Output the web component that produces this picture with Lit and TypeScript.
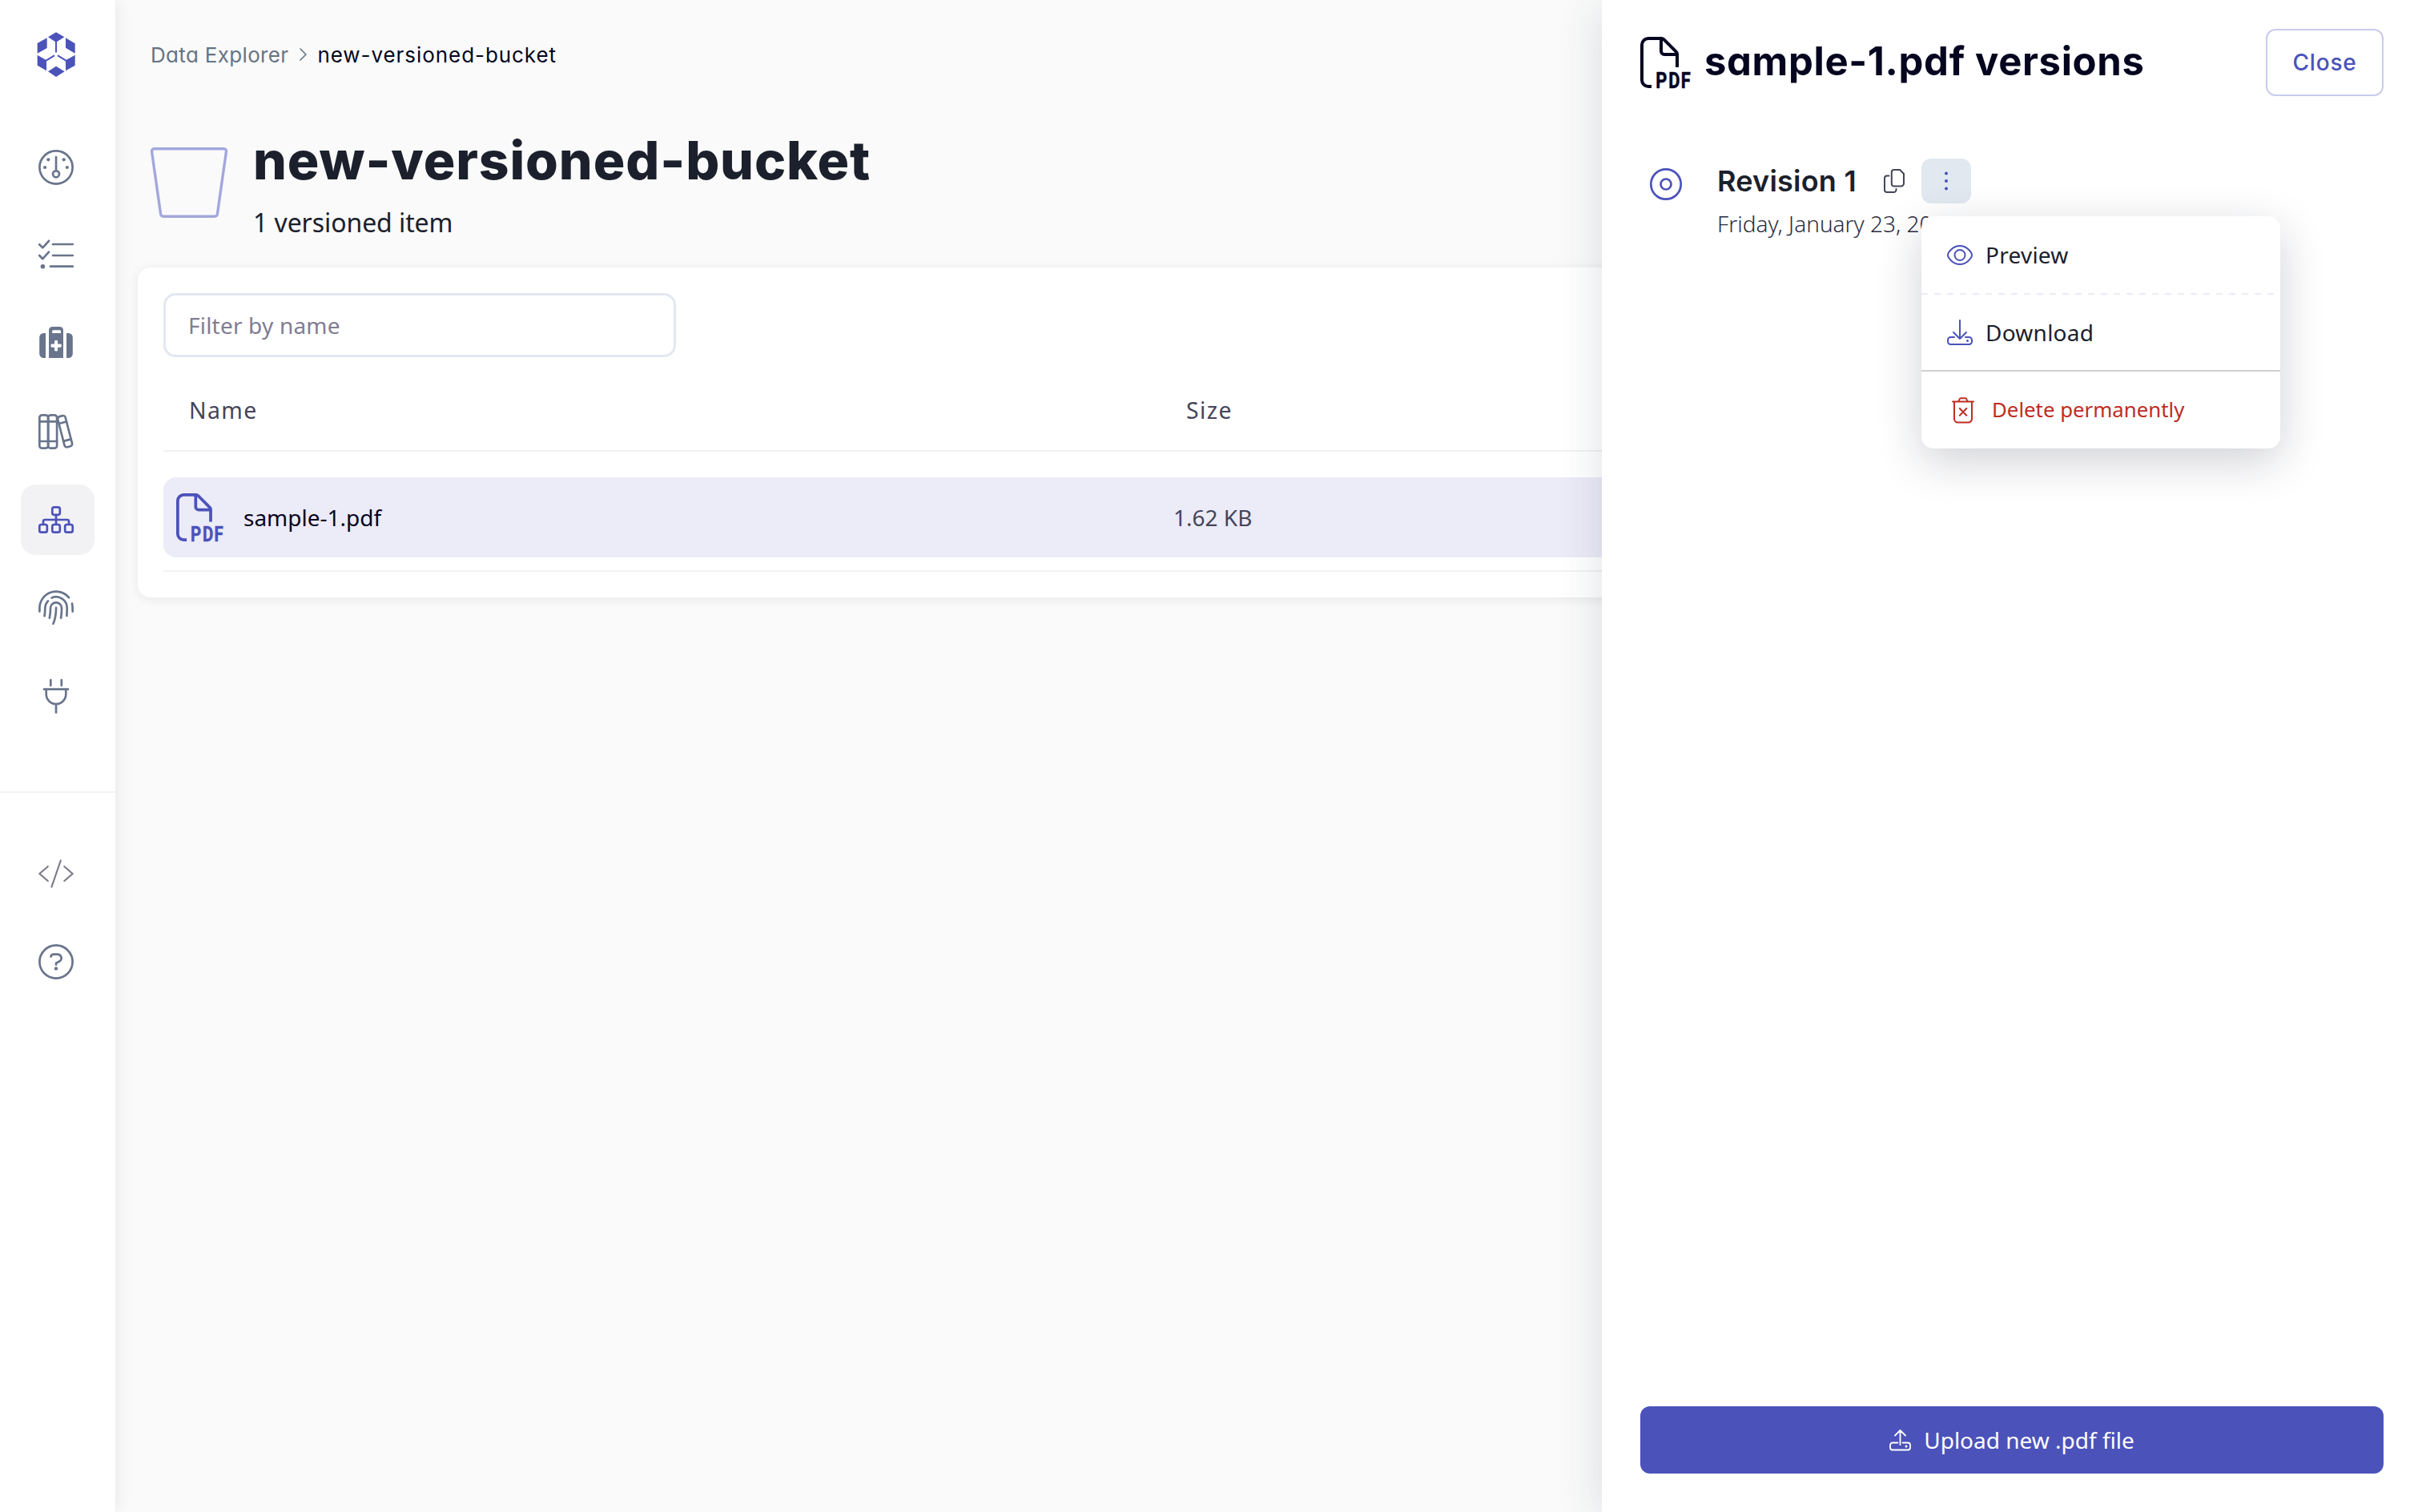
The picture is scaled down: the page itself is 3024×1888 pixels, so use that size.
import { LitElement, html, css, svg } from "lit";
import { customElement } from "lit/decorators.js";

const icon = (cls: string, w: number, h: number, body: unknown, vb = `0 0 ${w} ${h}`) =>
  html`<svg class="icon ${cls}" width=${w} height=${h} viewBox=${vb}>${body}</svg>`;

const logo = svg`
  <g fill="currentColor" stroke="none">
    <path d="M42 19L72 1l31 18-31 19zM2 42l36-20v38L2 80zM108 22l35 21v37l-35-21zM2 86l34 20v39L2 125zM108 106l35-20v39l-35 20zM42 148l30-20 32 20-32 20z"/>
  </g>
  <path d="M72 36v38M35 107l29-18M109 107L80 89" stroke-width="6"/>`;

const gauge = svg`
  <circle cx="22" cy="22" r="20.6"/><path d="M22 9v17"/><circle cx="22" cy="30.3" r="4"/>
  <g fill="currentColor" stroke="none"><circle cx="12.3" cy="12.3" r="2.1"/><circle cx="31.7" cy="12.3" r="2.1"/>
  <circle cx="8.1" cy="22" r="2.1"/><circle cx="35.8" cy="22" r="2.1"/></g>`;

const checklist = svg`
  <path d="M1.2 8.2l4.1 4.2L13 3.8M1.2 22l4.1 4.2L13 17.6M18 8h24.8M18 22h24.8M15 35.7h27.8"/>
  <circle cx="5.4" cy="35.7" r="2.8" fill="currentColor" stroke="none"/>`;

const suitcase = svg`
  <g fill="currentColor" stroke="none">
    <path d="M9 9v31H6.500a5.300 5.300 0 0 1-5.300-5.300V14.300A5.300 5.300 0 0 1 6.500 9zM35 9v31h2.500a5.300 5.300 0 0 0 5.300-5.300V14.300A5.300 5.300 0 0 0 37.500 9z"/>
    <path fill-rule="evenodd" d="M13 40V5.200A4.200 4.200 0 0 1 17.200 1h9.600A4.200 4.200 0 0 1 31 5.200V40zM17.200 9h10.800V6.500a1.300 1.300 0 0 0-1.300-1.300H18.500a1.300 1.300 0 0 0-1.300 1.300zM21.300 18a1.300 1.300 0 0 0-1.300 1.300v3.200h-3.200a1.300 1.300 0 0 0-1.300 1.300v1.600a1.300 1.300 0 0 0 1.300 1.300H20v3.400a1.300 1.300 0 0 0 1.300 1.300h1.500a1.300 1.300 0 0 0 1.300-1.300v-3.400h3.300a1.300 1.300 0 0 0 1.300-1.300v-1.600a1.300 1.300 0 0 0-1.300-1.300h-3.300v-3.200a1.300 1.300 0 0 0-1.300-1.300z"/>
  </g>`;

const books = svg`
  <rect x="1.300" y="1.300" width="10.800" height="41.400" rx="3.200"/><rect x="12.100" y="1.300" width="11" height="41.400" rx="3.200"/>
  <path d="M1.300 9.300h21.800M1.300 34h21.800"/>
  <g transform="rotate(-14.500 33 21.700)"><rect x="28.200" y="2" width="9.800" height="39.400" rx="3"/><path d="M28.200 10.400H38M28.200 33H38"/></g>`;

const tree = svg`
  <rect x="17.300" y="6.300" width="9.500" height="9.500" rx="2.200"/><rect x="1.300" y="28" width="9.500" height="9.700" rx="2.200"/>
  <rect x="17.300" y="28" width="9.500" height="9.700" rx="2.200"/><rect x="33.200" y="28" width="9.500" height="9.700" rx="2.200"/>
  <path d="M22 16v12M6 28v-4a2 2 0 0 1 2-2h28a2 2 0 0 1 2 2v4"/>`;

const fingerprint = svg`
  <path d="M1.400 26.600V22A20.600 20.600 0 0 1 38 9.200M42 16.500c.600 3 .700 6 .700 10.100M16.600 9.400A13.700 13.700 0 0 1 35.700 22c0 4 0 6.500-.400 10M12 13.400A13.700 13.700 0 0 0 8.300 22c0 4-.200 7-.800 10.200M13.800 34.700C14.800 30 15 26 15 22.300a7 7 0 0 1 14 0c0 4-.200 8-.900 12.400M22 21.900c0 8-1 14-3.500 19.900"/>`;

const plug = svg`
  <path d="M15.300 2v7M28.800 2v7M7 13.700h30M9.700 14v5.800a12.300 12.300 0 0 0 24.600 0V14M22 33v9.700"/>`;

const code = svg`<path stroke-width="2.200" d="M11.800 13L1.300 22l10.500 9M32.300 13l10.400 9-10.400 9M27.800 5.500L16.400 38.500"/>`;

const help = svg`
  <circle cx="22" cy="22" r="20.600"/>
  <path d="M15.500 15.600c.300-1.700 1.500-3 3.500-3h5.200a4.700 4.700 0 0 1 2.300 8.600L22 23.700V25.600"/>
  <circle cx="22" cy="30.400" r="2.200" fill="currentColor" stroke="none"/>`;

const bucket = svg`<path stroke-width="3.400" d="M4.500 1.700h87a3 3 0 0 1 3 3.400L83.400 83.300a3.600 3.600 0 0 1-3.500 3H16.100a3.600 3.600 0 0 1-3.500-3L1.500 5.100a3 3 0 0 1 3-3.400z"/>`;

const pdf = svg`
  <g stroke-width="4" stroke-linecap="butt">
    <path d="M14 62H10a8 8 0 0 1-8-8V10a8 8 0 0 1 8-8h16.500a4 4 0 0 1 2.800 1.200L44.800 18.700A4 4 0 0 1 46 21.500V38"/>
    <path d="M26 2v16a4 4 0 0 0 4 4h16"/>
  </g>
  <text class="pdf-label" transform="scale(0.78 1)" x="24.600 45.100 65.200" y="63.600">PDF</text>`;

const eye = svg`
  <path d="M1 12.500C1 10 6.500 1 16 1s15 9 15 11.500S25.500 24 16 24 1 15 1 12.500z"/><circle cx="16" cy="12.500" r="6.500"/>`;

const download = svg`
  <path d="M16 1v23M8 16l8 8 8-8M9 22H4.500A3.500 3.500 0 0 0 1 25.500v2A3.500 3.500 0 0 0 4.500 31h23a3.500 3.500 0 0 0 3.500-3.500v-2a3.500 3.500 0 0 0-3.500-3.500H23"/>
  <circle cx="25.500" cy="26.500" r="1.500" fill="currentColor" stroke="none"/>`;

const upload = svg`
  <path d="M13.500 19V1M7 7.500L13.500 1 20 7.500M10.500 16.500H4A3 3 0 0 0 1 19.500v3A3 3 0 0 0 4 25.500h19a3 3 0 0 0 3-3v-3a3 3 0 0 0-3-3h-6.500"/>
  <circle cx="21" cy="21" r="1.500" fill="currentColor" stroke="none"/>`;

const trash = svg`
  <path d="M1 5.500h26M3 5.500V27a4.500 4.500 0 0 0 4.500 4.500h13A4.500 4.500 0 0 0 25 27V5.500M8.500 5l1-2.500A2 2 0 0 1 11.300 1.200h5.400a2 2 0 0 1 1.800 1.300l1 2.500M9.800 14l8.500 8.700M18.300 14l-8.500 8.700"/>`;

const copy = svg`
  <path d="M12.500 1h7.500l5 5v12a3.500 3.500 0 0 1-3.500 3.500h-9A3 3 0 0 1 9.800 18.500V4A3 3 0 0 1 12.800 1zM6.500 8.500H4A3 3 0 0 0 1 11.500V26a3 3 0 0 0 3 3h8.500a3 3 0 0 0 3-3V25"/>`;

@customElement("app-root")
export class AppRoot extends LitElement {
  static styles = css`
    :host {
      display: block;
      --brand: #4b52ba;
      --ink: #050520;
      --text: #1b202c;
      --display: Inter, "Open Sans", sans-serif;
      font-family: "Noto Sans", "Open Sans", sans-serif;
      font-size: 28px;
      color: var(--text);
    }
    * { box-sizing: border-box; }
    .icon { display: block; flex: none; fill: none; stroke: currentColor; stroke-width: 2.7; stroke-linecap: round; stroke-linejoin: round; overflow: visible; }
    .shell { position: relative; display: flex; height: 1888px; background: #fafafa; overflow: hidden; white-space: nowrap; }
    .sidebar { position: relative; z-index: 1; width: 144px; flex: none; display: flex; flex-direction: column; background: #fff; box-shadow: 0 0 20px rgba(0, 0, 0, 0.09); color: #69758c; }
    .brand { padding: 40px 0 0 46px; height: 165px; color: var(--brand); }
    .nav { display: flex; flex-direction: column; gap: 22px; padding-left: 26px; }
    .nav-item { width: 92px; height: 88px; padding-left: 22px; display: flex; align-items: center; border-radius: 19px; }
    .nav-item.active { background: #f2f2f5; color: var(--brand); }
    .nav-item.muted { color: #7f7a8b; }
    .nav-lower { margin-top: 75px; padding-top: 57px; border-top: 2px solid #f1f1f2; }

    .main { flex: 1; min-width: 0; padding: 48px 32px 0 28px; }
    .crumbs { display: flex; align-items: center; height: 40px; padding-left: 16px; font: 400 26px/42px var(--display); font-feature-settings: "cv11"; color: #677483; }
    .crumb-root { padding-top: 1px; letter-spacing: 0.33px; }
    .chevron { margin: 0 13px 0 14px; stroke-width: 1.6; }
    .current { padding-top: 1px; letter-spacing: 0.94px; color: var(--ink); }
    .heading { display: flex; padding: 72px 0 0 16px; }
    .bucket { margin: 24px 31px 0 0; color: #a3a7dd; }
    .title { margin: 0; padding-left: 1px; font: 800 66px/80px var(--display); font-feature-settings: "cv11"; letter-spacing: 0.88px; }
    .subtitle { margin-top: 16px; padding-left: 1px; font-size: 32px; line-height: 44px; letter-spacing: -0.08px; }
    .card { margin-top: 34px; height: 412px; padding: 32px; border-radius: 16px; background: #fff; box-shadow: 0 2px 14px rgba(0, 0, 0, 0.08); }
    .filter { display: flex; align-items: center; width: 640px; height: 80px; padding-left: 28px; border: 3px solid #e2e8f0; border-radius: 15px; letter-spacing: 0.2px; color: #817c93; }
    .row { display: grid; grid-template-columns: 1245px 1fr; align-items: center; }
    .row.head { margin-top: 16px; height: 102px; padding-left: 32px; border-bottom: 2px solid #f2f2f4; font-size: 28.4px; letter-spacing: 0.05em; color: #444559; }
    .table-body { padding: 32px 0 16px; border-bottom: 2px solid #f2f2f4; }
    .row.file { height: 100px; padding-left: 16px; border-radius: 16px; background: #ecebf8; color: #444559; }
    .file-name { display: flex; align-items: center; gap: 26px; font-weight: 450; color: var(--ink); }
    .file-name .icon { color: var(--brand); }
    .pdf-label { font: 700 28px Roboto, "Liberation Sans", sans-serif; fill: currentColor; stroke: currentColor; stroke-width: 0.6; }

    .drawer { position: absolute; z-index: 2; top: 0; right: 0; width: 1024px; height: 1888px; padding: 36px 48px 48px; display: flex; flex-direction: column; background: #fff; box-shadow: 0 8px 52px rgba(40, 60, 80, 0.16); }
    .drawer-head { display: flex; align-items: center; height: 84px; color: var(--ink); }
    .drawer-title { flex: 1; margin: -2px 0 0 18px; font: 700 49px/84px var(--display); font-feature-settings: "cv11"; letter-spacing: 0.64px; }
    .close { display: flex; align-items: center; justify-content: center; width: 147px; height: 84px; border: 2px solid #c9cbec; border-radius: 12px; font: 500 28px/40px var(--display); letter-spacing: 0.8px; color: var(--brand); }
    .revisions { flex: 1; display: flex; padding: 78px 0 0 12px; }
    .node { margin-top: 12px; color: var(--brand); }
    .revision { margin-left: 44px; }
    .rev-line { display: flex; align-items: center; height: 56px; }
    .rev-title { width: 174px; font: 600 36px/56px var(--display); letter-spacing: 0.22px; }
    .copy { margin-left: 34px; color: #444559; stroke-width: 2; }
    .more { position: relative; display: flex; align-items: center; justify-content: center; width: 62px; height: 56px; margin-left: 21px; border-radius: 12px; background: #e2e8f0; color: var(--brand); }
    .date { margin-top: 5px; font-weight: 300; line-height: 40px; color: #2b2c3e; }
    .menu { position: absolute; top: 72px; left: 0; width: 448px; height: 290px; border-radius: 15px; background: #fff; box-shadow: 0 16px 56px rgba(20, 24, 50, 0.2); color: var(--text); font-weight: 450; }
    .menu .icon { stroke-width: 2; color: var(--brand); }
    .item { display: flex; align-items: center; gap: 16px; height: 96px; padding-left: 32px; letter-spacing: 0.25px; }
    .rule-dashed { height: 2px; background: repeating-linear-gradient(90deg, #ecebf8 0 8px, transparent 8px 16px); }
    .rule { height: 2px; background: #cfcfcf; }
    .item.second { height: 94px; }
    .item.second span { margin-top: -1px; }
    .item.danger, .item.danger .icon { color: #be2d23; }
    .item.danger { gap: 22px; height: 95px; padding-left: 38px; font-size: 25.8px; letter-spacing: 0; }
    .item.danger span { margin-top: -2px; }
    .upload { display: flex; align-items: center; justify-content: center; gap: 16px; height: 84px; border-radius: 12px; background: var(--brand); color: #fff; font-weight: 450; }
    .upload .icon { stroke-width: 1.8; }
  `;

  render() {
    return html`
      <div class="shell">
        <nav class="sidebar">
          <div class="brand">${icon("", 48, 56, logo, "0 0 144 168")}</div>
          <div class="nav">
            ${[gauge, checklist, suitcase, books, tree, fingerprint, plug].map(
              (g) => html`<div class="nav-item ${g === tree ? "active" : ""}">${icon("", 44, 44, g)}</div>`
            )}
          </div>
          <div class="nav-lower">
            <div class="nav">
              <div class="nav-item muted">${icon("", 44, 44, code)}</div>
              <div class="nav-item">${icon("", 44, 44, help)}</div>
            </div>
          </div>
        </nav>
        <main class="main">
          <div class="crumbs">
            <span class="crumb-root">Data Explorer</span>
            ${icon("chevron", 9, 16, svg`<path d="M1 1l7 7-7 7"/>`)}
            <span class="current">new-versioned-bucket</span>
          </div>
          <div class="heading">
            ${icon("bucket", 96, 88, bucket)}
            <div>
              <h1 class="title">new-versioned-bucket</h1>
              <div class="subtitle">1 versioned item</div>
            </div>
          </div>
          <section class="card">
            <div class="filter">Filter by name</div>
            <div class="row head"><span>Name</span><span>Size</span></div>
            <div class="table-body">
              <div class="row file">
                <div class="file-name">${icon("", 58, 60, pdf, "0 0 62 64")}<span>sample-1.pdf</span></div>
                <span>1.62 KB</span>
              </div>
            </div>
          </section>
        </main>
        <aside class="drawer">
          <header class="drawer-head">
            ${icon("", 62, 64, pdf)}
            <div class="drawer-title">sample-1.pdf versions</div>
            <div class="close">Close</div>
          </header>
          <div class="revisions">
            ${icon("node", 40, 40, svg`<circle cx="20" cy="20" r="18.700"/><circle cx="20" cy="20" r="6.500"/>`)}
            <div class="revision">
              <div class="rev-line">
                <span class="rev-title">Revision 1</span>
                ${icon("copy", 26, 30, copy)}
                <div class="more">
                  ${icon("", 6, 24, svg`<g fill="currentColor" stroke="none"><circle cx="3" cy="2.500" r="2"/><circle cx="3" cy="12" r="2"/><circle cx="3" cy="21.500" r="2"/></g>`)}
                  <div class="menu">
                    <div class="item">${icon("", 32, 25, eye)}<span>Preview</span></div>
                    <div class="rule-dashed"></div>
                    <div class="item second">${icon("", 32, 32, download)}<span>Download</span></div>
                    <div class="rule"></div>
                    <div class="item danger">${icon("", 28, 32, trash)}<span>Delete permanently</span></div>
                  </div>
                </div>
              </div>
              <div class="date">Friday, January 23, 2026 at 2:20 PM</div>
            </div>
          </div>
          <div class="upload">${icon("", 27, 27, upload)}<span>Upload new .pdf file</span></div>
        </aside>
      </div>
    `;
  }
}
